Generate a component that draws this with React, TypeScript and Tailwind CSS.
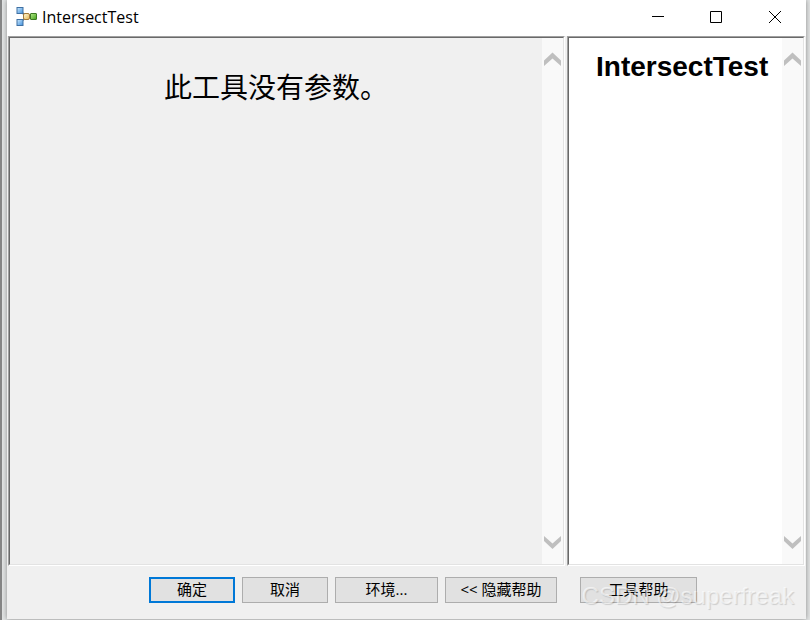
import React from "react";

const UI_FONT = "font-['Open_Sans','Noto_Sans_CJK_SC',sans-serif]";

function ModelIcon() {
  return (
    <svg width="22" height="20" viewBox="0 0 22 20" aria-hidden="true" className="shrink-0">
      <defs>
        <linearGradient id="blue" x1="0" y1="0" x2="1" y2="1">
          <stop offset="0" stopColor="#cfeafd" />
          <stop offset="1" stopColor="#3f8fdc" />
        </linearGradient>
        <linearGradient id="green" x1="0" y1="0" x2="1" y2="1">
          <stop offset="0" stopColor="#b4ec8c" />
          <stop offset="1" stopColor="#43a01a" />
        </linearGradient>
        <linearGradient id="yellow" x1="0" y1="0" x2="1" y2="1">
          <stop offset="0" stopColor="#fffbe0" />
          <stop offset="1" stopColor="#e6b550" />
        </linearGradient>
      </defs>
      <path d="M5 5 9 8M5 15l4-4M12 9.500h4" stroke="#626b72" strokeWidth="1.6" fill="none" />
      <rect x="1" y="0.500" width="6" height="6" fill="url(#blue)" stroke="#3f70a3" />
      <rect x="1" y="12.500" width="6" height="6" fill="url(#blue)" stroke="#3f70a3" />
      <rect x="7.500" y="6.500" width="6" height="6" rx="1.500" fill="url(#yellow)" stroke="#a07838" />
      <rect x="14.500" y="6.500" width="6" height="6" rx="0.500" fill="url(#green)" stroke="#3d7a24" />
    </svg>
  );
}

function WindowButton({ label, path }: { label: string; path: string }) {
  return (
    <button type="button" aria-label={label} className="flex h-full w-[58px] items-center justify-center">
      <svg width="14" height="14" viewBox="0 0 14 14" fill="none" stroke="#000">
        <path d={path} />
      </svg>
    </button>
  );
}

function ScrollBar() {
  return (
    <div className="flex w-[21px] shrink-0 flex-col justify-between bg-[#f9f9f9] py-3.5">
      <button type="button" aria-label="向上滚动" className="flex justify-center">
        <svg width="19" height="14" viewBox="0 0 19 14" fill="#bfbfbf">
          <path d="M9.500 .5l8.500 8v5.500L9.500 6.500 1 14V8.500z" />
        </svg>
      </button>
      <button type="button" aria-label="向下滚动" className="flex justify-center">
        <svg width="19" height="14" viewBox="0 0 19 14" fill="#bfbfbf">
          <path d="M9.500 13l8.500-8V0L9.500 7.500 1 0v5z" />
        </svg>
      </button>
    </div>
  );
}

function Panel({ className, children }: { className: string; children: React.ReactNode }) {
  return (
    <div className={`flex border border-t-[#a0a0a0] border-r-white border-b-white border-l-[#a0a0a0] ${className}`}>
      <section className="flex min-w-0 flex-1 border border-t-[#696969] border-r-[#e3e3e3] border-b-[#e3e3e3] border-l-[#696969]">
        <div className="min-w-0 flex-1">{children}</div>
        <ScrollBar />
      </section>
    </div>
  );
}

function DialogButton({ className, children }: { className: string; children: React.ReactNode }) {
  return (
    <button type="button" className={`flex h-[26px] shrink-0 items-start justify-center bg-[#e1e1e1] text-[15px] leading-5 whitespace-pre ${className}`}>
      {children}
    </button>
  );
}

export default function App() {
  return (
    <div className={`flex h-screen overflow-hidden border-l-2 border-[#858585] bg-[#e2e4e4] pr-1 pb-px pl-[5px] text-black ${UI_FONT}`}>
      <main className="relative flex min-w-0 flex-1 flex-col bg-[#f0f0f0] shadow-[0_0_5px_rgba(0,0,0,0.4)]">
        <header className="flex h-9 shrink-0 items-start bg-white pl-[9px]">
          <div className="flex flex-1 items-center gap-1 pt-[7px]">
            <ModelIcon />
            <h1 className="text-[16px] leading-5">IntersectTest</h1>
          </div>
          <div className="flex h-[34px] pr-0.5">
            <WindowButton label="最小化" path="M0 6.500h12" />
            <WindowButton label="最大化" path="M.5 1.500h11v11h-11z" />
            <WindowButton label="关闭" path="M1 1l12 12M13 1 1 13" />
          </div>
        </header>
        <div className="flex min-h-0 flex-1 gap-0.5 pr-px pl-px">
          <Panel className="flex-1 bg-[#f0f0f0]">
            <h2 className="pt-[30px] text-center font-['Noto_Sans_CJK_SC',sans-serif] text-[28px] leading-9">此工具没有参数。</h2>
          </Panel>
          <Panel className="w-[238px] shrink-0 bg-white">
            <h2 className="pt-[13px] pl-[27px] font-['Liberation_Sans',sans-serif] text-[28px] leading-8 font-bold">IntersectTest</h2>
          </Panel>
        </div>
        <footer className="flex h-[53px] shrink-0 justify-center gap-[7px] pt-[11px] pr-[109px] pl-[142px]">
          <DialogButton className="w-[86px] border-2 border-[#0078d7]">确定</DialogButton>
          <DialogButton className="w-[86px] border border-[#adadad] pt-px">取消</DialogButton>
          <DialogButton className="w-[103px] border border-[#adadad] pt-px">环境...</DialogButton>
          <DialogButton className="w-28 border border-[#adadad] pt-px">{"<< 隐藏帮助"}</DialogButton>
          <DialogButton className="ml-4 w-[117px] border border-[#adadad] pt-px">工具帮助</DialogButton>
        </footer>
        <span className="pointer-events-none absolute right-3 bottom-[7px] font-['Liberation_Sans',sans-serif] text-[24px] leading-8 whitespace-nowrap text-white/60 [text-shadow:1px_1px_1px_rgba(0,0,0,0.15)]">
          CSDN @superfreak
        </span>
      </main>
    </div>
  );
}
